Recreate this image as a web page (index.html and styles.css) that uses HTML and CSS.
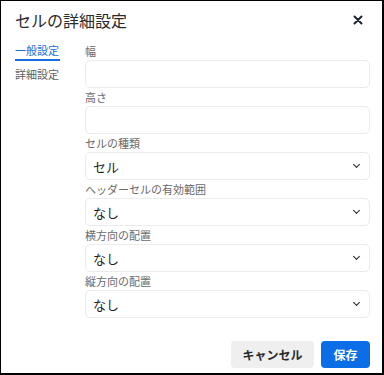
FILE: index.html
```html
<!DOCTYPE html>
<html lang="ja">

<head>
    <meta charset="UTF-8">
    <meta name="viewport" content="width=device-width, initial-scale=1.0">
    <title>セルの詳細設定</title>
    <link rel="stylesheet" href="styles.css">
</head>

<body>
    <div class="dialog">
        <div class="header">
            <h1 class="title">セルの詳細設定</h1>
            <button class="close" type="button" aria-label="閉じる">
                <svg width="10" height="10" viewBox="0 0 10 10">
                    <path d="M1.5 1.5 L8.5 8.5 M8.5 1.5 L1.5 8.5" stroke="#1c2331" stroke-width="2" stroke-linecap="round" fill="none" />
                </svg>
            </button>
        </div>

        <div class="content">
            <nav class="tabs">
                <a class="tab active">一般設定</a>
                <a class="tab">詳細設定</a>
            </nav>

            <div class="fields">
                <div class="field">
                    <label class="label">幅</label>
                    <div class="input"></div>
                </div>
                <div class="field">
                    <label class="label">高さ</label>
                    <div class="input"></div>
                </div>
                <div class="field">
                    <label class="label">セルの種類</label>
                    <div class="input select"><span>セル</span><i class="chevron"></i></div>
                </div>
                <div class="field">
                    <label class="label">ヘッダーセルの有効範囲</label>
                    <div class="input select"><span>なし</span><i class="chevron"></i></div>
                </div>
                <div class="field">
                    <label class="label">横方向の配置</label>
                    <div class="input select"><span>なし</span><i class="chevron"></i></div>
                </div>
                <div class="field">
                    <label class="label">縦方向の配置</label>
                    <div class="input select"><span>なし</span><i class="chevron"></i></div>
                </div>
            </div>
        </div>

        <div class="footer">
            <button class="btn cancel" type="button">キャンセル</button>
            <button class="btn save" type="button">保存</button>
        </div>
    </div>
</body>

</html>
```

FILE: styles.css
```css
* {
    padding: 0;
    margin: 0;
    box-sizing: border-box;
    font-family: "Noto Sans CJK JP", "Noto Sans", sans-serif;
}

body {
    background-color: #000;
}

.dialog {
    width: 381px;
    height: 372px;
    margin: 1px 0 0 1px;
    background-color: #fff;
    display: flex;
    flex-direction: column;
}

.header {
    display: flex;
    align-items: center;
    justify-content: space-between;
    height: 37px;
    padding: 0 19px 0 14px;
}

.title {
    font-size: 16px;
    font-weight: 400;
    color: #2b2b2b;
    line-height: 20px;
    padding-top: 1px;
}

.close {
    border: none;
    background: none;
    width: 10px;
    height: 10px;
    display: flex;
}

.content {
    display: flex;
    padding: 5px 12px 0 14px;
}

.tabs {
    width: 70px;
    display: flex;
    flex-direction: column;
}

.tab {
    font-size: 11px;
    line-height: 15px;
    color: #5f5f5f;
    width: 45px;
    padding-bottom: 1px;
    margin-bottom: 6px;
}

.tab.active {
    color: #1a6fe0;
    border-bottom: 2px solid #1a6fe0;
}

.fields {
    flex: 1;
    display: flex;
    flex-direction: column;
}

.field {
    display: flex;
    flex-direction: column;
}

.label {
    font-size: 11px;
    line-height: 16px;
    color: #6a6a6a;
    padding-bottom: 1px;
}

.input {
    height: 28px;
    border: 1px solid #ebebeb;
    border-radius: 5px;
    margin-bottom: 1px;
}

.select {
    display: flex;
    align-items: center;
    justify-content: space-between;
    padding: 0 10px 0 7px;
    font-size: 13px;
    color: #1f1f1f;
}

.chevron {
    width: 5px;
    height: 5px;
    border-right: 1.6px solid #1c2331;
    border-bottom: 1.6px solid #1c2331;
    transform: rotate(45deg);
    margin-top: -3px;
}

.footer {
    margin-top: auto;
    display: flex;
    justify-content: flex-end;
    gap: 7px;
    padding: 0 12px 5px 0;
}

.btn {
    height: 27px;
    border: none;
    border-radius: 4px;
    font-size: 12px;
    font-weight: 700;
    padding: 0;
}

.cancel {
    background-color: #efefef;
    color: #2b2b2b;
    width: 83px;
}

.save {
    background-color: #0b6ee6;
    color: #fff;
    width: 49px;
}
```
